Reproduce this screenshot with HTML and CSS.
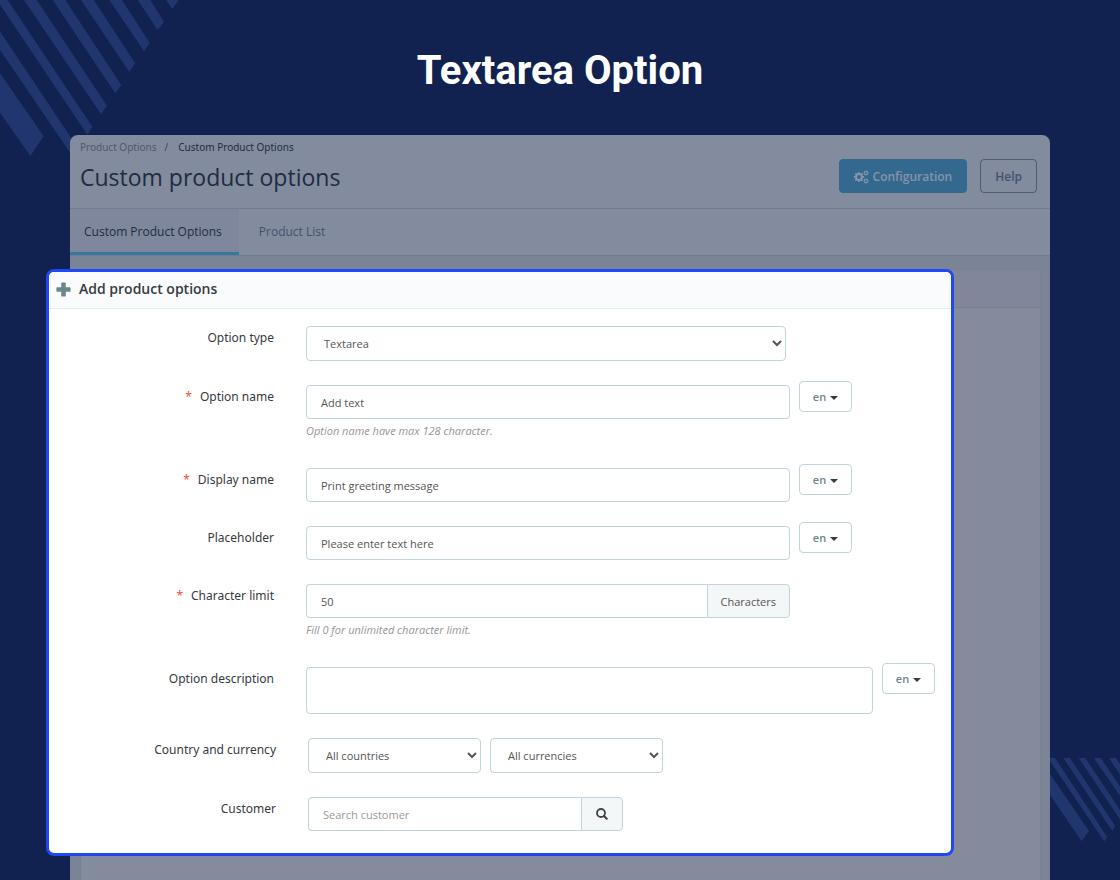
FILE: index.html
```html
<!DOCTYPE html>
<html lang="en">
<head>
<meta charset="utf-8">
<meta name="viewport" content="width=device-width, initial-scale=1">
<title>Textarea Option</title>
<link rel="stylesheet" href="styles.css">
</head>
<body class="page">
<svg class="stripes stripes-top" width="180" height="158" viewBox="0 0 180 158" aria-hidden="true">
  <path d="M0 73 43.6 136.3 30.4 156 0 112.7zM0 31.5 78 148.3 73 157 0 50zM-3 0H7.7L92.4 126.7 87.3 134.7zM24 0H36.7L107 105.7 101 114.3zM52.7 0H65.3L121.3 85 115.3 93.3zM81 0H93.7L135.3 63.3 129.3 72zM109.3 0H122L149.7 42.7 144 51.3zM137.7 0H150.3L164 21.7 157.7 30.3zM166 0H178.7L172.3 9z"/>
</svg>
<svg class="stripes stripes-bottom" width="70" height="84" viewBox="0 0 70 84" aria-hidden="true">
  <path d="M0 16 39 73 31.7 83.3 0 37zM0 0H5L57.3 79 54.3 83.5 0 3zM13.3 0H20L65.3 68 62.3 73zM28.7 0H35.3L74 58 71 63zM44 0H50.7L90 58 87 63zM59 0H66L90 36 87 42z"/>
</svg>

<h1 class="page-title">Textarea Option</h1>

<main class="stage">
  <div class="panel">
    <header class="panel-header">
      <div>
        <nav class="breadcrumb" aria-label="Breadcrumb">
          <a class="crumb" href="#">Product Options</a><span class="crumb-separator">/</span><a class="crumb crumb-current" href="#">Custom Product Options</a>
        </nav>
        <h2 class="panel-title">Custom product options</h2>
      </div>
      <div class="actions">
        <button class="button button-primary" type="button">
          <svg width="15" height="14" viewBox="0 0 15 14" fill="none" stroke="currentColor" aria-hidden="true">
            <circle cx="5" cy="7" r="2.9" stroke-width="2"/>
            <path d="M5 1.9v1.6M5 10.5v1.6M-.1 7h1.6M8.5 7h1.6M1.4 3.4l1.1 1.1M7.5 9.5l1.1 1.1M1.4 10.6l1.1-1.1M7.5 4.5l1.1-1.1" stroke-width="1.8"/>
            <circle cx="12" cy="3" r="1.5" stroke-width="1.1"/>
            <path d="M12 .3v1M12 4.7v1M9.4 3h1M13.6 3h1.1M10.2 1.2l.7.7M13.2 4.2l.7.7M10.2 4.8l.7-.7M13.2 1.9l.7-.7" stroke-width="1"/>
            <circle cx="12" cy="11" r="1.5" stroke-width="1.1"/>
            <path d="M12 8.3v1M12 12.7v1M9.4 11h1M13.6 11h1.1M10.2 9.2l.7.7M13.2 12.2l.7.7M10.2 12.8l.7-.7M13.2 9.9l.7-.7" stroke-width="1"/>
          </svg>
          Configuration
        </button>
        <button class="button button-outline" type="button">Help</button>
      </div>
    </header>
    <nav class="tabs" aria-label="Sections">
      <a class="tab tab-active" href="#">Custom Product Options</a>
      <a class="tab" href="#">Product List</a>
    </nav>
    <div class="panel-body">
      <div class="card"><div class="card-header"></div></div>
    </div>
  </div>

  <form class="dialog">
    <div class="dialog-header">
      <svg class="icon-plus" width="15" height="15" viewBox="0 0 15 15" aria-hidden="true">
        <path d="M6.1.5h2.8q.9 0 .9.9v3.9h3.9q.9 0 .9.9v2.7q0 .9-.9.9H9.8v3.9q0 .9-.9.9H6.1q-.9 0-.9-.9V9.800H1.300q-.9 0-.9-.9V6.200q0-.9.9-.9h3.900V1.400q0-.9.9-.9z"/>
      </svg>
      <h3 class="dialog-title">Add product options</h3>
    </div>

    <div class="rows">
      <div class="row">
        <label class="label" for="type">Option type</label>
        <div class="field">
          <select class="control select select-type" id="type"><option>Textarea</option></select>
        </div>
      </div>

      <div class="row">
        <label class="label" for="name"><span class="required">*</span>Option name</label>
        <div class="field">
          <div class="entry">
            <input class="control" id="name" type="text" value="Add text">
            <p class="hint">Option name have max 128 character.</p>
          </div>
          <button class="language" type="button">en<span class="caret"></span></button>
        </div>
      </div>

      <div class="row">
        <label class="label" for="display"><span class="required">*</span>Display name</label>
        <div class="field">
          <div class="entry"><input class="control" id="display" type="text" value="Print greeting message"></div>
          <button class="language" type="button">en<span class="caret"></span></button>
        </div>
      </div>

      <div class="row">
        <label class="label" for="placeholder">Placeholder</label>
        <div class="field">
          <div class="entry"><input class="control" id="placeholder" type="text" value="Please enter text here"></div>
          <button class="language" type="button">en<span class="caret"></span></button>
        </div>
      </div>

      <div class="row">
        <label class="label" for="limit"><span class="required">*</span>Character limit</label>
        <div class="field">
          <div class="entry">
            <div class="group">
              <input class="control" id="limit" type="text" value="50">
              <span class="addon">Characters</span>
            </div>
            <p class="hint">Fill 0 for unlimited character limit.</p>
          </div>
        </div>
      </div>

      <div class="row">
        <label class="label" for="description">Option description</label>
        <div class="field">
          <textarea class="control textarea" id="description"></textarea>
          <button class="language" type="button">en<span class="caret"></span></button>
        </div>
      </div>

      <div class="row row-wide">
        <label class="label" for="country">Country and currency</label>
        <div class="field">
          <select class="control select select-small" id="country"><option>All countries</option></select>
          <select class="control select select-small" id="currency" aria-label="Currency"><option>All currencies</option></select>
        </div>
      </div>

      <div class="row row-wide">
        <label class="label" for="customer">Customer</label>
        <div class="field">
          <div class="group group-search">
            <input class="control" id="customer" type="text" placeholder="Search customer">
            <button class="addon addon-search" type="button" aria-label="Search">
              <svg width="12" height="12" viewBox="0 0 12 12" fill="none" stroke="currentColor" aria-hidden="true">
                <circle cx="5" cy="5" r="4" stroke-width="1.8"/>
                <path d="M8 8l2.700 2.700" stroke-width="2.100" stroke-linecap="round"/>
              </svg>
            </button>
          </div>
        </div>
      </div>
    </div>
  </form>
</main>
</body>
</html>
```
FILE: styles.css
```css
* { box-sizing: border-box; }

.page {
  position: relative;
  display: flex;
  flex-direction: column;
  min-height: 100vh;
  margin: 0;
  background: #112150;
  color: #363a41;
  font-family: "Open Sans", "Noto Sans", sans-serif;
}

.stripes { position: absolute; fill: #21366e; }
.stripes-top { top: 0; left: 0; }
.stripes-bottom { right: 0; bottom: 38px; }

.page-title {
  margin: 0;
  padding: 43px 0 36px;
  color: #fff;
  font: 700 40px/56px Roboto, sans-serif;
  text-align: center;
}

/* The dialog shares one grid cell with the dimmed panel behind it. */
.stage { position: relative; display: grid; flex: 1; }

.panel {
  display: flex;
  flex-direction: column;
  grid-area: 1 / 1;
  margin: 0 70px;
  overflow: hidden;
  border-radius: 8px 8px 0 0;
  background: #838b9e;
  color: #1f2b43;
}

.panel-header {
  display: flex;
  justify-content: space-between;
  height: 74px;
  padding: 4px 13px 0 10px;
  border-bottom: 1px solid #727c90;
}

.breadcrumb { font-family: "Noto Sans", sans-serif; font-size: 10px; line-height: 16px; }
.crumb { color: #4f5a70; text-decoration: none; }
.crumb-current { color: #1f2b43; }
.crumb-separator { margin: 0 10px 0 8px; color: #3b465d; }
.panel-title { margin: 6px 0 0; font-size: 23px; font-weight: 400; line-height: 32px; }

.actions { display: flex; gap: 13px; padding-top: 20px; }
.button {
  display: flex;
  align-items: center;
  gap: 4px;
  height: 34px;
  padding: 1px 14px 0;
  border: 1px solid #4b5c78;
  border-radius: 4px;
  background: none;
  color: #42526e;
  font: 600 12px/18px "Open Sans", sans-serif;
}
.button-primary { border-color: #34698f; background: #34698f; color: #8793a8; }

.tabs { display: flex; height: 47px; border-bottom: 1px solid #727c90; }
.tab {
  padding: 14px 20px 0;
  color: #42526e;
  font-size: 12px;
  line-height: 18px;
  text-decoration: none;
}
.tab-active {
  padding: 14px 17px 0 14px;
  border-bottom: 3px solid #35789b;
  background: #7e879b;
  color: #1f2b43;
}

.panel-body { display: flex; flex: 1; padding: 13px 9px 0 10px; background: #7b8396; }
.card { flex: 1; border: 1px solid #778095; border-bottom: 0; border-radius: 4px 4px 0 0; background: #838b9d; }
.card-header { height: 38px; border-bottom: 1px solid #757f93; background: #81869b; }

.dialog {
  z-index: 1;
  grid-area: 1 / 1;
  align-self: start;
  margin: 134px 166px 24px 46px;
  overflow: hidden;
  border: 3px solid #2148f5;
  border-radius: 8px;
  background: #fff;
}
.dialog-header {
  display: flex;
  align-items: center;
  gap: 8px;
  height: 37px;
  padding: 0 7px 2px;
  border-bottom: 1px solid #e3edef;
  background: #fafbfd;
}
.icon-plus { fill: #6c868e; }
.dialog-title { margin: 0; font-size: 14px; font-weight: 600; line-height: 20px; }

.rows { display: flex; flex-direction: column; gap: 24px; padding: 17px 16px 22px 0; }
.row { display: grid; grid-template-columns: 225px 1fr; column-gap: 32px; align-items: start; }
.row-wide { grid-template-columns: 227px 1fr; }
.label { font-family: "Noto Sans", sans-serif; font-size: 12px; line-height: 24px; text-align: right; }
.required { margin-right: 8px; color: #ee5130; }
.field { display: flex; align-items: flex-start; gap: 9px; }
.entry { flex: 0 1 484px; }

.control {
  display: block;
  width: 100%;
  height: 34px;
  margin: 0;
  padding: 0 14px;
  border: 1px solid #c1d4d9;
  border-radius: 4px;
  background: #fff;
  color: #555;
  font: 400 11px/16px "Open Sans", sans-serif;
}
.control::placeholder { color: #999; opacity: 1; }
.select { height: 35px; padding: 0 13px; }
.select-type { max-width: 480px; }
.select-small { max-width: 173px; }
.textarea { flex: 1; height: 47px; resize: none; }

.hint { margin: 0; padding: 2px 0 3px; color: #959595; font-size: 11px; font-style: italic; line-height: 20px; }

.language {
  display: flex;
  align-items: center;
  justify-content: center;
  gap: 4px;
  width: 53px;
  height: 31px;
  margin-top: -4px;
  padding: 0;
  border: 1px solid #c1d4d9;
  border-radius: 4px;
  background: #fff;
  color: #6c868e;
  font: 600 11px/16px "Open Sans", sans-serif;
}
.caret { margin-top: 2px; border: 4px solid transparent; border-top-color: #363a41; border-bottom: 0; }

.group { display: flex; }
.group-search { flex: 0 1 315px; }
.group .control { flex: 1; width: auto; min-width: 0; border-right: 0; border-radius: 4px 0 0 4px; }
.addon {
  display: flex;
  align-items: center;
  padding: 0 13px;
  border: 1px solid #c1d4d9;
  border-radius: 0 4px 4px 0;
  background: #f4f7f8;
  color: #555;
  font-size: 11px;
}
.addon-search { padding: 0 14px; color: #444; }
```
